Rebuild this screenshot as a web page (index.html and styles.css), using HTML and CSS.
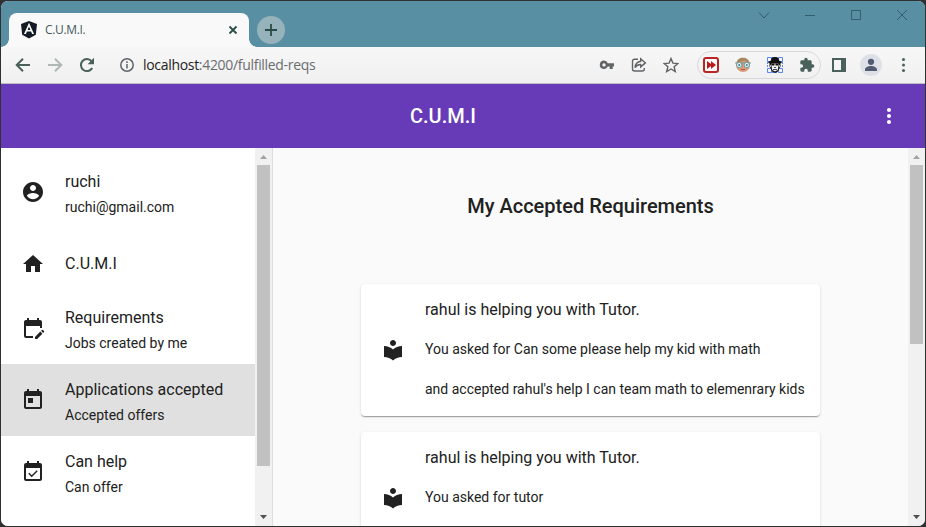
FILE: index.html
```html
<!DOCTYPE html>
<html lang="en">
<head>
<meta charset="utf-8">
<title>C.U.M.I.</title>
<link rel="stylesheet" href="styles.css">
</head>
<body>
<div class="window">
  <header class="tabstrip">
    <div class="tab">
      <svg class="favicon" viewBox="0 0 16 18"><path fill="#151b24" d="M8 0L16 3L14.8 13.8L8 17.5L1.2 13.8L0 3Z"/><path fill="#fff" fill-rule="evenodd" d="M8 1.8L13 13h-1.9l-1-2.5H5.9L4.9 13H3zM8 5.4L6.6 8.9h2.8z"/></svg>
      <span class="tab-title">C.U.M.I.</span>
      <svg class="tab-close" viewBox="0 0 10 10"><path d="M1.5 1.5l7 7M8.5 1.5l-7 7"/></svg>
    </div>
    <div class="new-tab"><svg width="12" height="12" viewBox="0 0 12 12"><path d="M6 0v12M0 6h12"/></svg></div>
    <div class="controls">
      <svg viewBox="0 0 46 28"><path d="M18 11.5l5 5.5 5-5.5"/></svg>
      <svg viewBox="0 0 46 28"><path d="M18 14.5h10"/></svg>
      <svg viewBox="0 0 46 28"><path d="M18.5 9.5h9v9h-9z"/></svg>
      <svg viewBox="0 0 46 28"><path d="M18 9l10 10M28 9L18 19"/></svg>
    </div>
  </header>
  <div class="toolbar">
    <div class="tool"><svg viewBox="0 0 16 16"><path class="line" d="M15 8H2M8 1.7L1.7 8 8 14.3"/></svg></div>
    <div class="tool dim"><svg viewBox="0 0 16 16"><path class="line" d="M1 8h13M8 1.7L14.3 8 8 14.3"/></svg></div>
    <div class="tool"><svg viewBox="0 0 16 16"><path class="line" d="M13.2 11A6 6 0 1 1 12.5 4.2L14 6"/><path d="M15 .8v6.4H8.6z"/></svg></div>
    <div class="address">
      <svg class="info" viewBox="0 0 14 14"><circle cx="7" cy="7" r="6.2"/><path d="M7 6v4.4M7 3.3v1.6"/></svg>
      <span class="url">localhost<span>:4200/fulfilled-reqs</span></span>
    </div>
    <div class="tool grey"><svg viewBox="0 0 16 16"><path fill-rule="evenodd" d="M5 3.6a4.2 4.2 0 0 1 3.8 2.6H15v3.4h-1.3V12h-3V9.6H8.8A4.2 4.2 0 1 1 5 3.6zM5 6.2a1.7 1.7 0 1 0 0 3.4 1.7 1.7 0 0 0 0-3.4z"/></svg></div>
    <div class="tool grey"><svg viewBox="0 0 16 16"><path class="thin" d="M7 2.2H3.5a2 2 0 0 0-2 2V12a2 2 0 0 0 2 2h7.8a2 2 0 0 0 2-2v-1"/><path class="thin" d="M9.7 1.8l4.7 4.1-4.7 4V7.5C7 7.5 5.3 8.5 4 10.5c.3-3.5 2.3-5.6 5.7-6.2z"/></svg></div>
    <div class="tool grey"><svg viewBox="0 0 16 16"><path class="thin" d="M8 1.5l1.9 4.6 5 .4-3.8 3.200 1.200 4.900L8 12l-4.300 2.600 1.200-4.900L1.100 6.500l5-.4z"/></svg></div>
    <div class="extensions">
      <div class="tool"><svg viewBox="0 0 16 16"><rect x="1" y="1" width="14" height="14" rx="2" fill="#fff" stroke="#b92525" stroke-width="2"/><path fill="#b81d1d" d="M4 4l4 3V4l5 4-5 4V9l-4 3z"/></svg></div>
      <div class="tool"><svg viewBox="0 0 16 16"><circle cx="8" cy="8" r="7" fill="#d79b7a"/><path fill="#a8875f" d="M1.500 6C2 2.500 5 .7 8 .8S14 2.500 14.500 6L9 3.500z"/><path d="M0 6h16" stroke="#8b9187"/><circle cx="4.200" cy="8" r="2.700" fill="#d5eef0" stroke="#709b9e"/><circle cx="11.800" cy="8" r="2.700" fill="#d5eef0" stroke="#709b9e"/><circle cx="4.200" cy="8" r="1" fill="#4b7c84"/><circle cx="11.800" cy="8" r="1" fill="#4b7c84"/><path d="M6 12.500h4" stroke="#bb584a"/></svg></div>
      <div class="tool"><svg viewBox="0 0 16 16"><path fill="none" stroke="#5b87ee" d="M.5.5h4v4h-4zM11.500.5h4v4h-4zM.5 11.500h4v4h-4zM11.500 11.500h4v4h-4z"/><path fill="none" stroke="#5b87ee" stroke-dasharray="2 1" d="M.5 5v6M15.500 5v6M5 .5h6M5 15.500h6"/><path fill="#111" d="M4.500 1q3.500-1.800 7 0l.5 2.500 3 1.500-1 1.500H13l1 2.500-1.500 2-1.500 3.500-3 1.500-3-1.500L3.500 11 2 9l1-2.500H2L1 5l3-1.500z"/><path fill="#f2f2f2" d="M4.500 6.500h7V9l-.7 4L8 14.500 5.200 13l-.7-4zM2.700 8h1v2h-1zM12.300 8h1v2h-1z"/><path fill="#111" d="M4.500 6.500h3v2H5zM8.500 6.500h3l-.5 2H8.500zM7 10h2v.8H7zM6 12h4v.8H6z"/></svg></div>
      <div class="tool"><svg viewBox="0 0 24 24"><path d="M20.500 11H19V7c0-1.100-.9-2-2-2h-4V3.500a2.500 2.500 0 0 0-5 0V5H4c-1.100 0-2 .9-2 2v3.800h1.500a2.700 2.700 0 0 1 0 5.400H2V20c0 1.100.9 2 2 2h3.800v-1.500a2.700 2.700 0 0 1 5.400 0V22H17c1.100 0 2-.9 2-2v-4h1.500a2.500 2.500 0 0 0 0-5z"/></svg></div>
    </div>
    <div class="tool"><svg viewBox="0 0 16 16"><path fill-rule="evenodd" d="M1 1h14v14H1zM3 3v10h7V3z"/></svg></div>
    <div class="tool"><div class="avatar"><svg viewBox="0 0 24 24"><path d="M12 12a4.700 4.700 0 1 0 0-9.400 4.700 4.700 0 0 0 0 9.400zm0 1.500c-4 0-9 2-9 5.500v2h18v-2c0-3.500-5-5.500-9-5.500z"/></svg></div></div>
    <div class="tool"><svg viewBox="0 0 16 16"><circle cx="8.500" cy="2.500" r="1.500"/><circle cx="8.500" cy="8" r="1.500"/><circle cx="8.500" cy="13.500" r="1.500"/></svg></div>
  </div>
  <div class="appbar">
    <h1>C.U.M.I</h1>
    <svg class="more" viewBox="0 0 24 24"><path d="M12 8c1.100 0 2-.9 2-2s-.9-2-2-2-2 .9-2 2 .9 2 2 2zm0 2c-1.100 0-2 .9-2 2s.9 2 2 2 2-.9 2-2-.9-2-2-2zm0 6c-1.100 0-2 .9-2 2s.9 2 2 2 2-.9 2-2-.9-2-2-2z"/></svg>
  </div>
  <div class="body">
    <aside class="sidebar">
      <nav>
        <div class="item profile">
          <svg class="icon" viewBox="0 0 24 24"><path d="M12 2C6.480 2 2 6.480 2 12s4.480 10 10 10 10-4.480 10-10S17.520 2 12 2zm0 3c1.660 0 3 1.340 3 3s-1.340 3-3 3-3-1.340-3-3 1.340-3 3-3zm0 14.200c-2.500 0-4.710-1.280-6-3.220.03-1.990 4-3.080 6-3.080 1.990 0 5.970 1.090 6 3.080-1.290 1.940-3.500 3.220-6 3.220z"/></svg>
          <div class="label"><p class="name">ruchi</p><p class="sub">ruchi@gmail.com</p></div>
        </div>
        <div class="item single">
          <svg class="icon" viewBox="0 0 24 24"><path d="M10 20v-6h4v6h5v-8h3L12 3 2 12h3v8z"/></svg>
          <p class="name">C.U.M.I</p>
        </div>
        <div class="item">
          <svg class="icon" viewBox="0 0 24 24"><path d="M12 22H5a2 2 0 0 1-2-2V6c0-1.100.9-2 2-2h1V2h2v2h8V2h2v2h1c1.100 0 2 .9 2 2v6h-2v-2H5v10h7v2zm10.130-5.010l.71-.71a1 1 0 0 0 0-1.410l-.71-.71a1 1 0 0 0-1.410 0l-.71.71 2.120 2.120zm-.71.710l-5.300 5.300H14v-2.120l5.300-5.300 2.120 2.120z"/></svg>
          <div class="label"><p class="name">Requirements</p><p class="sub">Jobs created by me</p></div>
        </div>
        <div class="item active">
          <svg class="icon" viewBox="0 1 24 24"><path d="M19 4h-1V2h-2v2H8V2H6v2H5a2 2 0 0 0-2 2v14c0 1.100.9 2 2 2h14c1.100 0 2-.9 2-2V6c0-1.100-.9-2-2-2zm0 16H5V9h14v11zM7 11h5v5H7z"/></svg>
          <div class="label"><p class="name">Applications accepted</p><p class="sub">Accepted offers</p></div>
        </div>
        <div class="item">
          <svg class="icon" viewBox="0 1 24 24"><path d="M19 4h-1V2h-2v2H8V2H6v2H5a2 2 0 0 0-2 2v14c0 1.100.9 2 2 2h14c1.100 0 2-.9 2-2V6c0-1.100-.9-2-2-2zm0 16H5V9h14v11z"/><path class="tick" d="M7.800 14.300l2.900 2.900 5.500-5.500"/></svg>
          <div class="label"><p class="name">Can help</p><p class="sub">Can offer</p></div>
        </div>
      </nav>
      <div class="scrollbar"><i class="up"></i><b class="thumb side"></b><i class="down"></i></div>
    </aside>
    <main>
      <section class="content">
        <h2>My Accepted Requirements</h2>
        <article class="card">
          <svg class="icon" viewBox="0 0 24 24"><path d="M12 11.550C9.640 9.350 6.480 8 3 8v11c3.480 0 6.640 1.350 9 3.550 2.360-2.190 5.520-3.550 9-3.550V8c-3.480 0-6.640 1.350-9 3.550zM12 8c1.660 0 3-1.340 3-3s-1.340-3-3-3-3 1.340-3 3 1.340 3 3 3z"/></svg>
          <div><p class="lead">rahul is helping you with Tutor.</p><p>You asked for Can some please help my kid with math</p><p>and accepted rahul's help I can team math to elemenrary kids</p></div>
        </article>
        <article class="card">
          <svg class="icon" viewBox="0 0 24 24"><path d="M12 11.550C9.640 9.350 6.480 8 3 8v11c3.480 0 6.640 1.350 9 3.550 2.360-2.190 5.520-3.550 9-3.550V8c-3.480 0-6.640 1.350-9 3.550zM12 8c1.660 0 3-1.340 3-3s-1.340-3-3-3-3 1.340-3 3 1.340 3 3 3z"/></svg>
          <div><p class="lead">rahul is helping you with Tutor.</p><p>You asked for tutor</p></div>
        </article>
      </section>
      <div class="scrollbar"><i class="up"></i><b class="thumb page"></b><i class="down"></i></div>
    </main>
  </div>
</div>
</body>
</html>
```
FILE: styles.css
```css
* { box-sizing: border-box; }
body {
  margin: 0;
  padding: 1px;
  height: 527px;
  overflow: hidden;
  background: #303033;
  font-family: Roboto, "Liberation Sans", sans-serif;
  color: #212121;
}
svg { display: block; flex: none; }
h1, h2, p { margin: 0; }
.window {
  display: flex;
  flex-direction: column;
  width: 924px;
  height: 525px;
  border-radius: 7px;
  overflow: hidden;
  background: #fafafa;
}

/* Tab strip */
.tabstrip {
  display: flex;
  flex: none;
  height: 46px;
  padding-left: 8px;
  background: #588fa2;
}
.tab {
  position: relative;
  display: flex;
  align-items: center;
  width: 240px;
  height: 34px;
  margin-top: 12px;
  padding: 0 12px;
  border-radius: 8px 8px 0 0;
  background: #f9f9f9;
}
.tab::before, .tab::after {
  content: "";
  position: absolute;
  bottom: 0;
  width: 8px;
  height: 8px;
}
.tab::before { left: -8px; background: radial-gradient(circle at 0 0, transparent 7.5px, #f7f7f7 8px); }
.tab::after { right: -8px; background: radial-gradient(circle at 100% 0, transparent 7.5px, #f7f7f7 8px); }
.favicon { width: 16px; height: 18px; }
.tab-title {
  flex: 1;
  margin-left: 8px;
  padding-bottom: 1px;
  font: 12px "Open Sans", sans-serif;
  letter-spacing: -.35px;
  color: #45595c;
}
.tab-close { width: 10px; height: 10px; margin-right: -1px; }
.tab-close path, .new-tab path { fill: none; stroke: #294c45; stroke-width: 1.8; }
.new-tab {
  display: grid;
  place-items: center;
  width: 28px;
  height: 28px;
  margin: 15px 0 0 8px;
  border-radius: 50%;
  background: #96b2ba;
}
.controls { display: flex; margin-left: auto; }
.controls svg { width: 46px; height: 28px; }
.controls path { fill: none; stroke: #365d6b; stroke-width: 1; }

/* Address bar */
.toolbar {
  display: flex;
  align-items: center;
  flex: none;
  height: 37px;
  padding: 0 6px;
  border-bottom: 1px solid #bdbdc4;
  background: linear-gradient(#f7f7f7, #f0f0f0);
}
.tool {
  display: grid;
  place-items: center;
  flex: none;
  width: 32px;
  height: 28px;
  fill: #49615a;
  stroke: none;
}
.tool svg { width: 16px; height: 16px; }
.line { fill: none; stroke: #49615a; stroke-width: 2; }
.dim { opacity: .4; }
.grey { fill: #616467; }
.thin { fill: none; stroke: #616467; stroke-width: 1.4; }
.address { display: flex; align-items: center; flex: 1; padding-left: 17px; }
.info { width: 14px; height: 14px; }
.info circle, .info path { fill: none; stroke: #5f6368; stroke-width: 1.5; }
.url {
  margin-left: 9px;
  font: 14px/18px "Open Sans", sans-serif;
  letter-spacing: -.31px;
  white-space: nowrap;
  color: #222;
}
.url span { color: #6a6d70; }
.extensions {
  display: flex;
  align-items: center;
  width: 124px;
  height: 28px;
  margin: 0 2px 0 10px;
  border: 1px solid #d6d8da;
  border-radius: 14px;
}
.extensions .tool:first-child { width: 30px; margin-left: -1px; padding-right: 2px; }
.avatar {
  display: grid;
  place-items: center;
  width: 22px;
  height: 22px;
  border-radius: 50%;
  background: #dde0e7;
  fill: #535b73;
}

/* Application bar */
.appbar {
  display: flex;
  align-items: center;
  flex: none;
  height: 64px;
  padding: 0 24px 0 409px;
  background: #673ab7;
  color: #fff;
}
.appbar h1 { flex: 1; font-size: 20px; font-weight: 500; line-height: 32px; }
.more { width: 24px; height: 24px; fill: #fff; }
.body { display: flex; flex: 1; min-height: 0; }
.sidebar {
  display: flex;
  width: 272px;
  border-right: 1px solid #dedede;
  background: #fff;
}
nav { width: 254px; padding-top: 8px; overflow: hidden; }
.item {
  display: flex;
  align-items: center;
  height: 72px;
  padding-left: 20px;
}
.profile { margin-bottom: 8px; }
.single { height: 56px; }
.active { background: #e0e0e0; }
.icon { width: 24px; height: 24px; margin-right: 20px; fill: #212121; }
.tick { fill: none; stroke: #212121; stroke-width: 1.4; }
.label { padding-top: 4px; }
.name { font-size: 16px; line-height: 26px; }
.sub { font-size: 14px; line-height: 24px; }

/* Page content */
main { display: flex; flex: 1; min-width: 0; }
.content {
  display: flex;
  flex-direction: column;
  flex: 1;
  gap: 16px;
  padding: 42px 88px 0;
  overflow: hidden;
}
h2 {
  margin-bottom: 46px;
  font-size: 20px;
  font-weight: 500;
  line-height: 32px;
  text-align: center;
}
.card {
  display: flex;
  align-items: center;
  flex: none;
  height: 132px;
  padding-left: 20px;
  border-radius: 4px;
  background: #fff;
  box-shadow: 0 2px 1px -1px rgba(0,0,0,.2), 0 1px 1px rgba(0,0,0,.14), 0 1px 3px rgba(0,0,0,.12);
}
.card > div { height: 120px; }
.card p { height: 40px; font-size: 14px; line-height: 38px; white-space: nowrap; }
.card .lead { font-size: 16px; line-height: 40px; }

/* Scrollbars */
.scrollbar {
  display: flex;
  flex-direction: column;
  align-items: center;
  flex: none;
  width: 17px;
  background: #f1f1f1;
}
.thumb { width: 13px; background: #c1c1c1; }
.side { height: 301px; }
.page { height: 179px; }
.up, .down { width: 7px; height: 4px; }
.up { margin: 7px 0 6px; background: #a3a3a3; clip-path: polygon(50% 0, 100% 100%, 0 100%); }
.down { margin: auto 0 7px; background: #505050; clip-path: polygon(0 0, 100% 0, 50% 100%); }
```
